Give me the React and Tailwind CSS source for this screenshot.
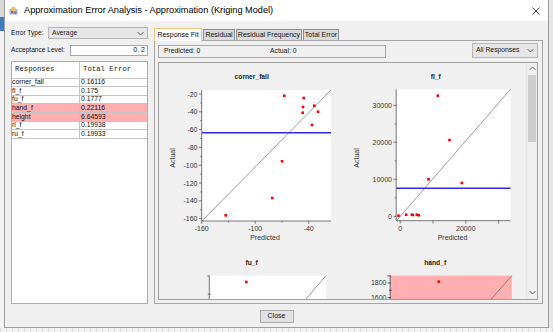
import React from 'react';

const SANS = "font-['Liberation_Sans',Arial,sans-serif]";
const MONO = "font-['Liberation_Mono','Courier_New',monospace]";
const FONT = 'Liberation Sans, Arial, sans-serif';

const ROWS = [
  { name: 'corner_fall', value: '0.16116' },
  { name: 'fl_f', value: '0.175' },
  { name: 'fu_f', value: '0.1777' },
  { name: 'hand_f', value: '0.22116', bad: true },
  { name: 'height', value: '6.64593', bad: true },
  { name: 'rl_f', value: '0.19938' },
  { name: 'ru_f', value: '0.19933' },
];

const Dot = ({ x, y }) => <rect x={x - 1.3} y={y - 1.3} width="2.6" height="2.6" fill="#ff0000" />;

const Label = ({ x, y, anchor = 'middle', children, ...rest }) => (
  <text x={x} y={y} fontSize="7" fill="#333" fontFamily={FONT} textAnchor={anchor} dominantBaseline="central" {...rest}>
    {children}
  </text>
);

const Title = ({ x, y, children }) => (
  <text x={x} y={y} fontSize="6.7" fontWeight="bold" fill="#222" fontFamily={FONT} textAnchor="middle" dominantBaseline="central">
    {children}
  </text>
);

const Chevron = ({ up }) => (
  <svg width="7" height="5" viewBox="0 0 7 5">
    <polyline points={up ? '0.5,4 3.5,1 6.5,4' : '0.5,1 3.5,4 6.5,1'} fill="none" stroke="#606060" strokeWidth="1" />
  </svg>
);

function CornerFallChart() {
  const x = (v) => 43.7 + (v + 160) * 0.8917;
  const y = (v) => 32 + (-20 - v) * 0.89;
  const yLabels = [-20, -40, -60, -80, -100, -120, -140, -160];
  const yMinor = [-30, -50, -70, -90, -110, -130, -150];
  const pts = [
    [126.3, 33.7], [145.7, 36], [145, 45], [144.7, 50.7], [156.3, 43.7],
    [160, 49.7], [154, 63], [124, 99.3], [114.3, 136], [67.7, 153.3],
  ];
  return (
    <svg width="184" height="186" className="block">
      <g transform="translate(-1,-1)">
        <Title x={93.7} y={14.7}>corner_fall</Title>
        <rect x="44" y="28" width="129" height="131" fill="#fff" />
        <line x1="43.7" y1="28" x2="43.7" y2="159" stroke="#555" strokeWidth="0.8" />
        <line x1="43.7" y1="159" x2="173" y2="159" stroke="#555" strokeWidth="0.8" />
        {yLabels.map((v) => (
          <g key={v}>
            <line x1="41" y1={y(v)} x2="43.7" y2={y(v)} stroke="#555" strokeWidth="0.8" />
            <Label x={39.5} y={y(v)} anchor="end">{v}</Label>
          </g>
        ))}
        {yMinor.map((v) => (
          <line key={v} x1="42.2" y1={y(v)} x2="43.7" y2={y(v)} stroke="#555" strokeWidth="0.8" />
        ))}
        {[-160, -100, -40].map((v) => (
          <g key={v}>
            <line x1={x(v)} y1="159" x2={x(v)} y2="161.8" stroke="#555" strokeWidth="0.8" />
            <Label x={x(v)} y={166.3}>{v}</Label>
          </g>
        ))}
        {[-130, -70].map((v) => (
          <line key={v} x1={x(v)} y1="159" x2={x(v)} y2="160.6" stroke="#555" strokeWidth="0.8" />
        ))}
        <line x1="44" y1="159" x2="173" y2="28" stroke="#555" strokeWidth="0.6" />
        <line x1="44" y1="70.7" x2="173" y2="70.7" stroke="#2b2be8" strokeWidth="1.4" />
        {pts.map(([px, py], i) => <Dot key={i} x={px} y={py} />)}
        <Label x={107} y={175.7}>Predicted</Label>
        <Label x={14.3} y={96} transform="rotate(-90 14.3 96)">Actual</Label>
      </g>
    </svg>
  );
}

function FlChart() {
  const x = (v) => 59.7 + v * 0.00328;
  const y = (v) => 154.3 - v * 0.0037;
  const pts = [
    [97.3, 33.7], [109, 78], [88, 117.3], [121.3, 121], [58, 153.7],
    [65.7, 152.7], [71.3, 152.7], [72.3, 153], [76.3, 152.7], [78.3, 153.3],
  ];
  return (
    <svg width="184" height="186" className="block">
      <g transform="translate(-1.5,-1)">
        <Title x={95.3} y={14.7}>fl_f</Title>
        <rect x="55.7" y="27.3" width="114.3" height="131.4" fill="#fff" />
        <line x1="55.7" y1="27.3" x2="55.7" y2="158.7" stroke="#555" strokeWidth="0.8" />
        <line x1="55.7" y1="158.7" x2="170" y2="158.7" stroke="#555" strokeWidth="0.8" />
        {[0, 10000, 20000, 30000].map((v) => (
          <g key={v}>
            <line x1="53" y1={y(v)} x2="55.7" y2={y(v)} stroke="#555" strokeWidth="0.8" />
            <Label x={51.5} y={y(v)} anchor="end">{v}</Label>
          </g>
        ))}
        {[5000, 15000, 25000].map((v) => (
          <line key={v} x1="54.2" y1={y(v)} x2="55.7" y2={y(v)} stroke="#555" strokeWidth="0.8" />
        ))}
        {[0, 10000, 20000, 30000].map((v) => (
          <line key={v} x1={x(v)} y1="158.7" x2={x(v)} y2="161.5" stroke="#555" strokeWidth="0.8" />
        ))}
        <Label x={x(0)} y={166.3}>0</Label>
        <Label x={x(20000)} y={166.3}>20000</Label>
        <line x1="56" y1="158.7" x2="170" y2="27.3" stroke="#555" strokeWidth="0.6" />
        <line x1="55.7" y1="126.3" x2="170" y2="126.3" stroke="#2b2be8" strokeWidth="1.4" />
        {pts.map(([px, py], i) => <Dot key={i} x={px} y={py} />)}
        <Label x={112} y={175.7}>Predicted</Label>
        <Label x={16.3} y={96} transform="rotate(-90 16.3 96)">Actual</Label>
      </g>
    </svg>
  );
}

function FuChart() {
  return (
    <svg width="184" height="186" className="block">
      <g transform="translate(-1,-0.7)">
        <Title x={93.7} y={14.3}>fu_f</Title>
        <rect x="51.3" y="27.3" width="116.7" height="100" fill="#fff" />
        <line x1="51.3" y1="27.3" x2="51.3" y2="127" stroke="#555" strokeWidth="0.8" />
        <line x1="49.3" y1="27.6" x2="51.3" y2="27.6" stroke="#555" strokeWidth="0.8" />
        <line x1="49.8" y1="46" x2="52.8" y2="46" stroke="#555" strokeWidth="0.8" />
        <line x1="168" y1="27.3" x2="105" y2="101" stroke="#555" strokeWidth="0.6" />
        <Dot x={88.3} y={33.7} />
      </g>
    </svg>
  );
}

function HandChart() {
  return (
    <svg width="184" height="186" className="block">
      <g transform="translate(-1.5,-0.7)">
        <Title x={94.7} y={14.3}>hand_f</Title>
        <rect x="50.3" y="27.3" width="121" height="100" fill="#ffafaf" />
        <line x1="49.7" y1="27.3" x2="49.7" y2="127" stroke="#333" strokeWidth="0.8" />
        {[27.6, 34.7, 49.3].map((ty) => (
          <line key={ty} x1="47" y1={ty} x2="50.5" y2={ty} stroke="#333" strokeWidth="0.8" />
        ))}
        <line x1="48.5" y1="42" x2="51.3" y2="42" stroke="#333" strokeWidth="0.8" />
        <Label x={46} y={34.7} anchor="end">1800</Label>
        <Label x={46} y={49.3} anchor="end">1600</Label>
        <line x1="171.3" y1="27.3" x2="110" y2="97" stroke="#555" strokeWidth="0.6" />
        <Dot x={98.3} y={33.3} />
      </g>
    </svg>
  );
}

const TABS = [
  { label: 'Response Fit', w: 'w-[48px]', active: true },
  { label: 'Residual', w: 'w-[32px]' },
  { label: 'Residual Frequency', w: 'w-[66px]' },
  { label: 'Total Error', w: 'w-[36px]' },
];

export default function App() {
  return (
    <div className={`w-[553px] h-[332px] overflow-hidden bg-[#ececec] ${SANS} text-[#111]`}>
      <div className="flex h-[328px]">
        {/* window behind */}
        <div className="w-[4px] flex flex-col bg-[#f0f0f0]">
          <div className="h-[17px] bg-[#d9d9d9]" />
          <div className="h-[14px] bg-[#3f7cc6]" />
          <div className="flex-1 bg-[#f3f3f3]" />
        </div>

        <div className="w-[545px] h-[328px] flex flex-col border border-t-0 border-[#9c9c9c] bg-[#f0f0f0]">
          {/* title bar */}
          <div className="h-[21px] shrink-0 bg-white flex items-center">
            <svg className="ml-[4px]" width="9" height="9" viewBox="0 0 9 9">
              <rect x="0.5" y="3" width="8" height="5.5" fill="#9fb7e0" />
              <circle cx="4.5" cy="2.8" r="2.3" fill="#f2c84b" />
              <rect x="2" y="5" width="2" height="2.5" fill="#e0483c" />
              <rect x="5" y="5.5" width="2.5" height="2" fill="#4b78c8" />
            </svg>
            <span className="ml-[6px] text-[9.2px] text-black leading-none">
              Approximation Error Analysis - Approximation (Kriging Model)
            </span>
            <svg className="ml-auto mr-[8px]" width="8" height="8" viewBox="0 0 8 8">
              <line x1="0.5" y1="0.5" x2="7.5" y2="7.5" stroke="#333" strokeWidth="0.9" />
              <line x1="7.5" y1="0.5" x2="0.5" y2="7.5" stroke="#333" strokeWidth="0.9" />
            </svg>
          </div>

          {/* main */}
          <div className="flex h-[283px] shrink-0 pt-[6px] pl-[6px] pr-[5px] gap-[6px]">
            {/* left */}
            <div className="w-[137px] h-[277px] flex flex-col">
              <div className="h-[12px] shrink-0 flex items-center">
                <span className="text-[6.6px]">Error Type:</span>
                <div className="ml-auto w-[100px] h-[12px] border border-[#b4b4b4] bg-[#e6e6e6] flex items-center px-[3px]">
                  <span className="text-[6.8px] text-[#222]">Average</span>
                  <span className="ml-auto"><Chevron /></span>
                </div>
              </div>
              <div className="mt-[6px] h-[10.5px] shrink-0 flex items-center">
                <span className="text-[6.6px]">Acceptance Level:</span>
                <div className="ml-auto w-[78px] h-[10.5px] border border-[#a9a9a9] bg-white flex items-center justify-end pr-[2px]">
                  <span className="text-[7px]">0.&nbsp;2</span>
                </div>
              </div>
              <div className="mt-[5.5px] h-[243px] border border-[#adadad] bg-white flex flex-col overflow-hidden">
                <div className={`h-[16.5px] shrink-0 flex items-center border-b border-[#c8c8c8] ${MONO} text-[7.3px] text-[#222]`}>
                  <div className="w-[68px] h-full flex items-center pl-[3px] border-r border-[#c8c8c8]">Responses</div>
                  <div className="pl-[3px]">Total Error</div>
                </div>
                {ROWS.map((r) => (
                  <div
                    key={r.name}
                    className={`h-[8.67px] shrink-0 flex items-center border-b border-[#c4c4c4] text-[6.8px] leading-none ${r.bad ? 'bg-[#ffafaf]' : ''}`}
                  >
                    <div className="w-[68px] h-full flex items-center border-r border-[#c4c4c4]">{r.name}</div>
                    <div className="pl-[1px]">{r.value}</div>
                  </div>
                ))}
              </div>
            </div>

            {/* right */}
            <div className="w-[389px] h-[277px] flex flex-col">
              <div className="h-[13px] shrink-0 flex items-end gap-[1px]">
                {TABS.map((t) =>
                  t.active ? (
                    <div
                      key={t.label}
                      className={`${t.w} h-[13px] flex items-center justify-center border border-b-0 border-[#efc97a] bg-[#fbfbfb] text-[7px] -mb-[1px] relative`}
                    >
                      {t.label}
                    </div>
                  ) : (
                    <div
                      key={t.label}
                      className={`${t.w} h-[11.5px] flex items-center justify-center border border-b-0 border-[#8f8f8f] bg-[#dadada] text-[7px]`}
                    >
                      {t.label}
                    </div>
                  )
                )}
              </div>
              <div className="h-[264px] border border-[#a5a5a5] bg-[#f0f0f0] flex flex-col pl-[3px] pr-[4px]">
                <div className="h-[16.5px] shrink-0 flex items-end">
                  <div className="w-[228px] h-[13px] border border-[#a8a8a8] flex items-center text-[6.8px]">
                    <span className="w-[111px] pl-[5px]">Predicted: 0</span>
                    <span>Actual: 0</span>
                  </div>
                  <div className="ml-auto w-[66px] h-[15px] border border-[#b4b4b4] bg-[#e6e6e6] flex items-center pl-[3px] pr-[3px]">
                    <span className="text-[6.8px]">All Responses</span>
                    <span className="ml-auto"><Chevron /></span>
                  </div>
                </div>
                <div className="mt-[4.2px] h-[238px] shrink-0 border border-[#a0a0a0] flex overflow-hidden">
                  <div className="flex-1 min-w-0 h-full overflow-hidden">
                    <div className="grid grid-cols-[183px_184px]">
                      <CornerFallChart />
                      <FlChart />
                      <FuChart />
                      <HandChart />
                    </div>
                  </div>
                  <div className="w-[11px] shrink-0 h-full flex flex-col bg-[#f0f0f0] border-l border-[#e4e4e4]">
                    <div className="h-[12px] flex items-center justify-center"><Chevron up /></div>
                    <div className="h-[67px] mx-[1px] bg-[#cdcdcd]" />
                    <div className="flex-1" />
                    <div className="h-[12px] flex items-center justify-center"><Chevron /></div>
                  </div>
                </div>
              </div>
            </div>
          </div>

          {/* close */}
          <div className="flex-1 flex justify-center pt-[6px]">
            <div className="w-[34px] h-[13px] border border-[#adadad] bg-[#e1e1e1] flex items-center justify-center text-[7px]">
              Close
            </div>
          </div>
        </div>

        <div className="w-[4px] bg-[#e6e6e6]" />
      </div>
      <div className="h-[4px] bg-[repeating-linear-gradient(90deg,#dadada_0_1px,#f3f3f3_1px_6px)]" />
    </div>
  );
}
